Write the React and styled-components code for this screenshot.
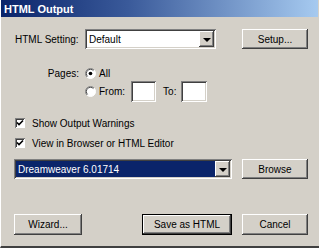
import React, { useState } from 'react';
import styled, { createGlobalStyle, css } from 'styled-components';

const GlobalStyle = createGlobalStyle`
  html, body {
    margin: 0;
    padding: 0;
    background: #d4d0c8;
  }
  * {
    box-sizing: border-box;
  }
`;

const raised = css`
  box-shadow: inset -1px -1px #404040, inset 1px 1px #ffffff,
    inset -2px -2px #808080, inset 2px 2px #d4d0c8;
`;

const sunken = css`
  box-shadow: inset 1px 1px #808080, inset -1px -1px #ffffff,
    inset 2px 2px #404040, inset -2px -2px #d4d0c8;
`;

const Window = styled.div`
  width: 319px;
  height: 248px;
  display: flex;
  flex-direction: column;
  background: #d4d0c8;
  border-left: 1px solid #ffffff;
  border-bottom: 2px solid #404040;
  font-family: 'Liberation Sans', Arial, sans-serif;
  font-size: 10px;
  color: #000;
`;

const TitleBar = styled.div`
  height: 17px;
  margin-right: 1px;
  padding-left: 3px;
  display: flex;
  align-items: center;
  background: linear-gradient(to right, #0a246a 0%, #3a5a9a 40%, #a6caf0 100%);
  color: #fff;
  font-weight: bold;
  font-size: 11px;
`;

const Content = styled.div`
  flex: 1;
  display: flex;
  flex-direction: column;
  padding: 12px 11px 11px 13px;
`;

const Row = styled.div`
  display: flex;
  align-items: center;
  height: ${(p) => p.$h || 20}px;
  margin-top: ${(p) => p.$mt || 0}px;
  padding-left: ${(p) => p.$indent || 0}px;
  gap: ${(p) => p.$gap || 0}px;
`;

const Label = styled.span`
  width: ${(p) => p.$w}px;
  padding-left: ${(p) => (p.$right ? 0 : 1)}px;
  padding-right: ${(p) => (p.$right ? 6 : 0)}px;
  text-align: ${(p) => (p.$right ? 'right' : 'left')};
  white-space: nowrap;
`;

const Select = styled.div`
  width: ${(p) => p.$w}px;
  height: 20px;
  padding: 2px;
  display: flex;
  background: #fff;
  ${sunken};
`;

const SelectValue = styled.div`
  flex: 1;
  display: flex;
  align-items: center;
  padding-left: 2px;
  background: ${(p) => (p.$selected ? '#0a246a' : '#fff')};
  color: ${(p) => (p.$selected ? '#fff' : '#000')};
  white-space: nowrap;
`;

const ArrowButton = styled.div`
  width: 15px;
  display: flex;
  align-items: center;
  justify-content: center;
  background: #d4d0c8;
  ${raised};
  &::after {
    content: '';
    border-left: 4px solid transparent;
    border-right: 4px solid transparent;
    border-top: 4px solid #000;
    margin-top: 1px;
  }
`;

const Button = styled.button`
  width: ${(p) => p.$w}px;
  height: ${(p) => p.$h || 20}px;
  margin-left: ${(p) => (p.$push ? 'auto' : '0')};
  padding: 0;
  border: none;
  background: #d4d0c8;
  font-family: inherit;
  font-size: 10px;
  color: #000;
  ${(p) =>
    p.$default
      ? css`
          box-shadow: inset 0 0 0 1px #000, inset -2px -2px #404040,
            inset 2px 2px #ffffff, inset -3px -3px #808080;
        `
      : raised};
`;

const TextBox = styled.div`
  width: ${(p) => p.$w}px;
  height: 21px;
  background: #fff;
  ${sunken};
`;

const RadioLabel = styled.label`
  display: flex;
  align-items: center;
  gap: 3px;
`;

const CheckLabel = styled.label`
  display: flex;
  align-items: center;
  gap: 7px;
  padding-left: 1px;
`;

const Box = styled.div`
  width: 10px;
  height: 10px;
  background: #fff;
  display: flex;
  align-items: center;
  justify-content: center;
  box-shadow: inset 1px 1px #808080, inset -1px -1px #ffffff,
    inset 2px 2px #404040;
`;

const Footer = styled.div`
  margin-top: auto;
  display: flex;
  align-items: center;
  gap: 10px;
`;

const Radio = ({ checked }) => (
  <svg width="11" height="11" viewBox="0 0 12 12">
    <circle cx="6" cy="6" r="5.5" fill="#fff" />
    <path d="M2.1 9.9 A5.5 5.5 0 0 1 9.9 2.1" stroke="#808080" fill="none" />
    <path d="M9.9 2.1 A5.5 5.5 0 0 1 2.1 9.9" stroke="#ffffff" fill="none" />
    <path d="M2.8 9.2 A4.5 4.5 0 0 1 9.2 2.8" stroke="#404040" fill="none" />
    {checked && <circle cx="6" cy="6" r="2" fill="#000" />}
  </svg>
);

const Check = () => (
  <Box>
    <svg width="8" height="8" viewBox="0 0 8 8">
      <path d="M1 3.5 L3 5.5 L7 1.5" stroke="#000" strokeWidth="1.6" fill="none" />
    </svg>
  </Box>
);

export default function App() {
  const [setting] = useState('Default');
  const [editor] = useState('Dreamweaver 6.01714');

  return (
    <>
      <GlobalStyle />
      <Window>
        <TitleBar>HTML Output</TitleBar>
        <Content>
          <Row $h={20}>
            <Label $w={71}>HTML Setting:</Label>
            <Select $w={131}>
              <SelectValue>{setting}</SelectValue>
              <ArrowButton />
            </Select>
            <Button $w={66} $push>
              Setup...
            </Button>
          </Row>

          <Row $h={14} $mt={17}>
            <Label $w={71} $right>
              Pages:
            </Label>
            <RadioLabel>
              <Radio checked />
              All
            </RadioLabel>
          </Row>
          <Row $h={21} $mt={1} $indent={71}>
            <RadioLabel>
              <Radio />
              From:
            </RadioLabel>
            <TextBox $w={25} style={{ marginLeft: 6 }} />
            <span style={{ margin: '0 5px 0 7px' }}>To:</span>
            <TextBox $w={26} />
          </Row>

          <Row $h={14} $mt={14}>
            <CheckLabel>
              <Check />
              Show Output Warnings
            </CheckLabel>
          </Row>
          <Row $h={14} $mt={6}>
            <CheckLabel>
              <Check />
              View in Browser or HTML Editor
            </CheckLabel>
          </Row>

          <Row $h={20} $mt={9}>
            <Select $w={218}>
              <SelectValue $selected>{editor}</SelectValue>
              <ArrowButton />
            </Select>
            <Button $w={66} $push>
              Browse
            </Button>
          </Row>

          <Footer>
            <Button $w={68} $h={21}>
              Wizard...
            </Button>
            <Button $w={90} $h={21} $default $push>
              Save as HTML
            </Button>
            <Button $w={66} $h={21}>
              Cancel
            </Button>
          </Footer>
        </Content>
      </Window>
    </>
  );
}
